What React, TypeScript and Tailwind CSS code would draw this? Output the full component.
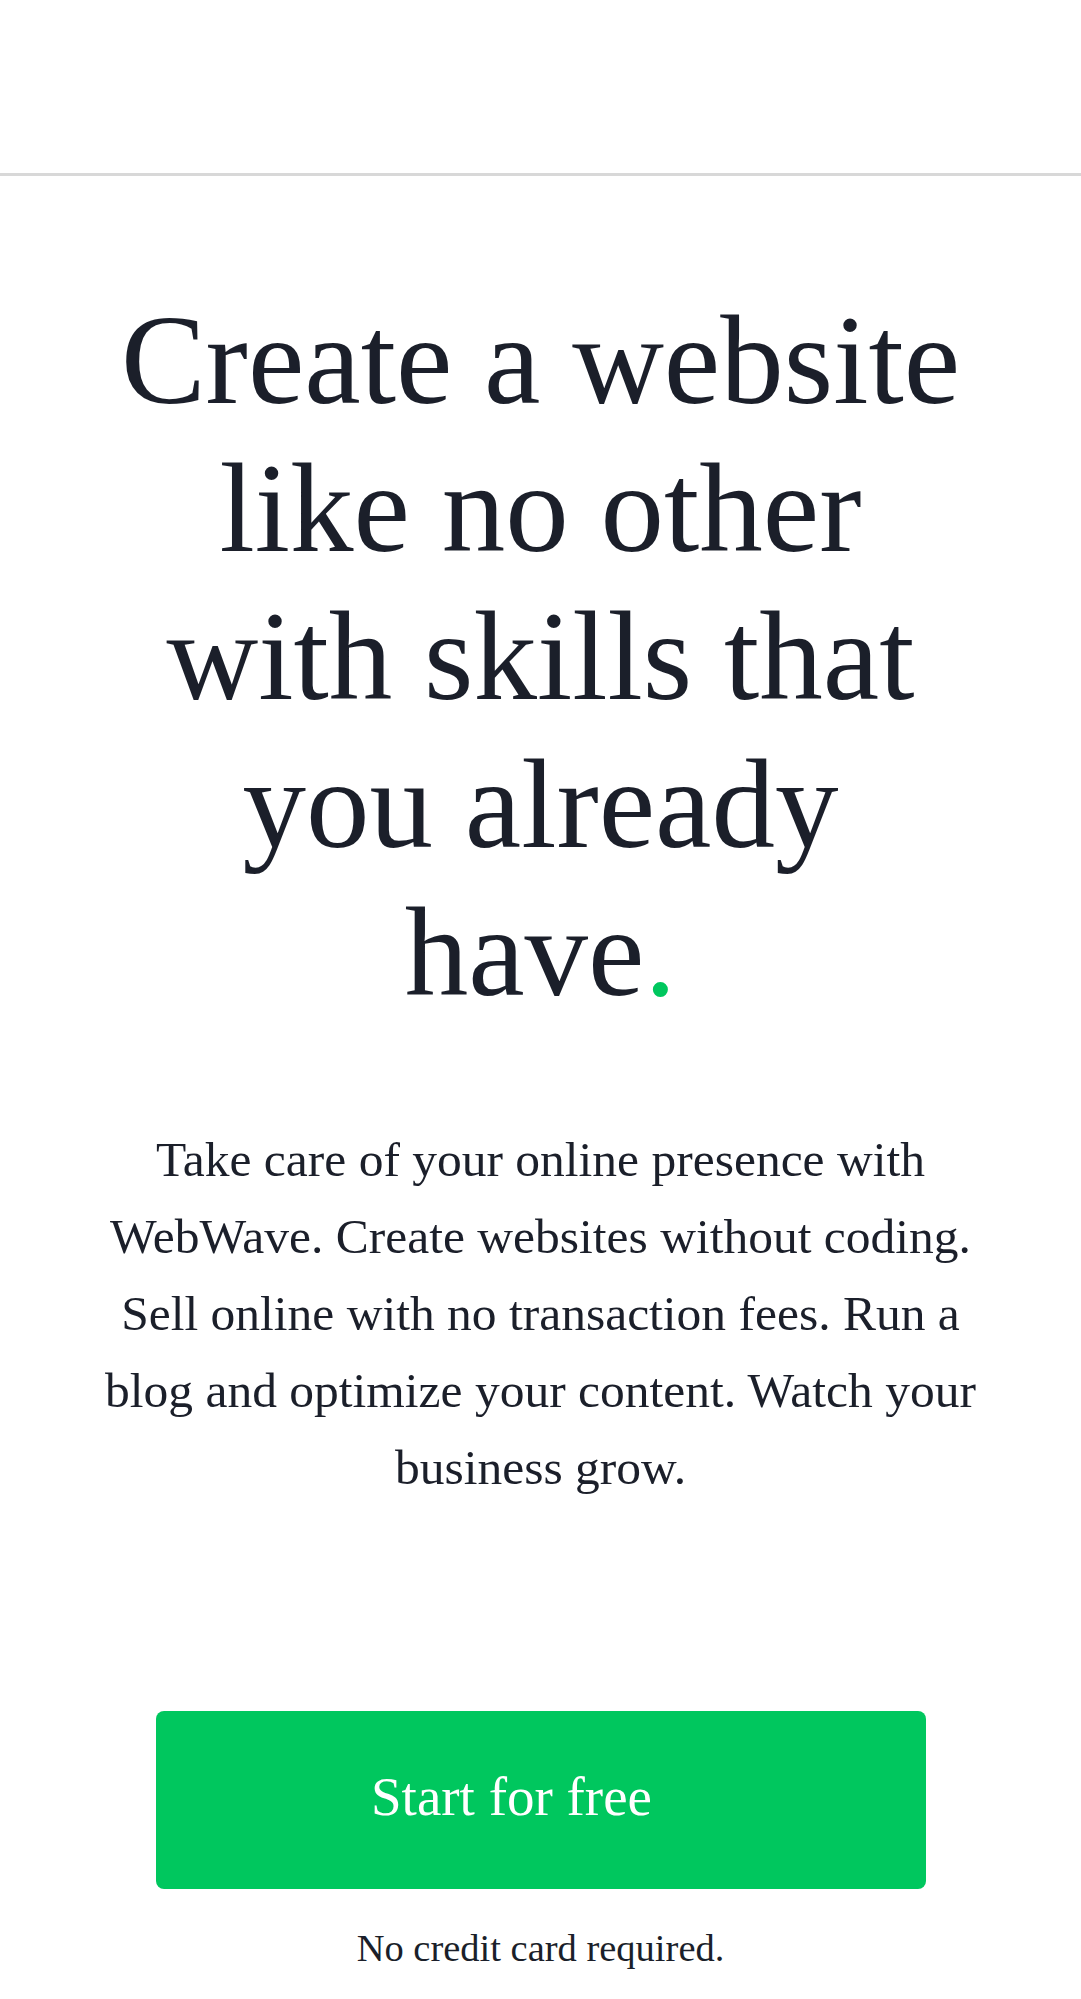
const Hero = () => {
  return (
    <section className="px-[100px] pt-[110px] text-center text-[#1b1f2a]">
      <h1 className="text-[127px] leading-[148px] font-normal">
        Create a website like no other with skills that you already have
        <span className="text-[#00c75e]">.</span>
      </h1>
      <p className="mt-[95px] text-[49.5px] leading-[77px]">
        Take care of your online presence with WebWave. Create websites without
        coding. Sell online with no transaction fees. Run a blog and optimize
        your content. Watch your business grow.
      </p>
    </section>
  );
};

const Cta = () => {
  return (
    <div className="mt-[205px] flex flex-col items-center">
      <a
        href="#"
        className="flex h-[178px] w-[770px] items-center justify-center rounded-[8px] bg-[#00c75e] pr-[58px] pb-[6px] text-[55px] text-white"
      >
        Start for free
      </a>
      <p className="mt-[31px] text-[38.5px] leading-[1.5] text-[#1b1f2a]">
        No credit card required.
      </p>
    </div>
  );
};

export default function App() {
  return (
    <div className="min-h-screen bg-white font-['Liberation_Serif','Times_New_Roman',serif]">
      <header className="h-[176px] border-b-[3px] border-[#d8d8d8]" />
      <Hero />
      <Cta />
    </div>
  );
}
